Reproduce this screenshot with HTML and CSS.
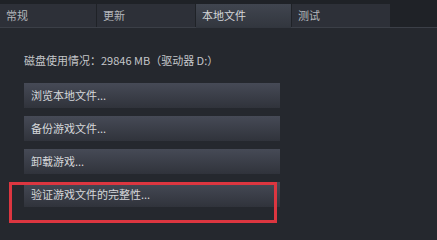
FILE: index.html
```html
<!DOCTYPE html>
<html lang="zh">
<head>
<meta charset="utf-8">
<link rel="stylesheet" href="styles.css">
</head>
<body>
<div class="tabs">
  <div class="tab t1">常规</div>
  <div class="tab t2">更新</div>
  <div class="tab t3 active">本地文件</div>
  <div class="tab t4">测试</div>
</div>
<div class="content">
  <div class="usage">磁盘使用情况：29846 MB（驱动器 D:）</div>
  <div class="buttons">
    <div class="btn">浏览本地文件...</div>
    <div class="btn">备份游戏文件...</div>
    <div class="btn">卸载游戏...</div>
    <div class="btn">验证游戏文件的完整性...</div>
  </div>
  <div class="highlight"></div>
</div>
</body>
</html>
```
FILE: styles.css
```css
html, body {
  margin: 0;
  padding: 0;
  width: 437px;
  height: 234px;
  overflow: hidden;
  background: #25282e;
  font-family: "Noto Sans CJK SC", "Liberation Sans", sans-serif;
  color: #c6c8cc;
}
.tabs {
  display: flex;
  gap: 1px;
  padding-top: 4px;
  background: #1f2227;
  border-bottom: 1px solid #3b3f47;
  height: 23px;
}
.tab {
  padding-left: 6px;
  box-sizing: border-box;
  background: #2d3038;
  font-size: 11px;
  line-height: 22px;
  color: #b4b7bc;
}
.t1 { width: 96px; }
.t2 { width: 98px; }
.t3 { width: 95px; }
.t4 { width: 98px; }
.tab.active {
  background: linear-gradient(#40454f, #32363e);
  color: #d4d6d9;
  height: 24px;
}
.content {
  position: relative;
  padding: 24px 0 0 24px;
}
.usage {
  font-size: 11px;
  line-height: 16px;
  color: #c4c6c9;
}
.buttons {
  margin-top: 15px;
  display: flex;
  flex-direction: column;
  gap: 8px;
}
.btn {
  width: 256px;
  height: 25px;
  box-sizing: border-box;
  padding-left: 7px;
  background: linear-gradient(#464a56, #30333b);
  font-size: 11px;
  line-height: 24px;
  color: #d6d8db;
}
.highlight {
  position: absolute;
  left: 9px;
  top: 154px;
  width: 268px;
  height: 41px;
  box-sizing: border-box;
  border: 3px solid #dc3640;
}
```
